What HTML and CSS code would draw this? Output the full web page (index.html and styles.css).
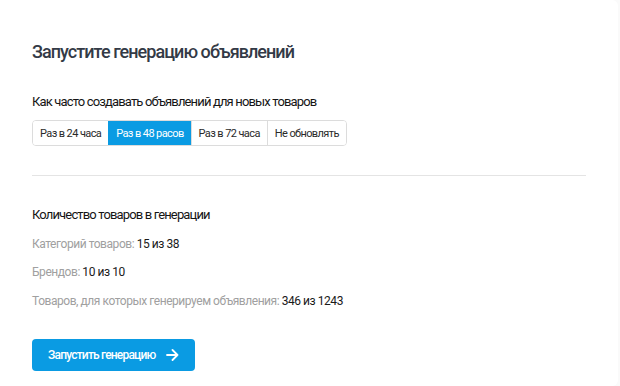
FILE: index.html
```html
<!DOCTYPE html>
<html lang="ru">
<head>
    <meta charset="UTF-8">
    <meta name="viewport" content="width=device-width, initial-scale=1.0">
    <title>Генерация объявлений</title>
    <link rel="stylesheet" href="styles.css">
</head>
<body>
<div class="card">
    <h1 class="card-title">Запустите генерацию объявлений</h1>

    <!-- частота генерации -->
    <div class="section">
        <div class="section-label">Как часто создавать объявлений для новых товаров</div>
        <div class="segments">
            <button class="segment">Раз в 24 часа</button>
            <button class="segment active">Раз в 48 расов</button>
            <button class="segment">Раз в 72 часа</button>
            <button class="segment">Не обновлять</button>
        </div>
    </div>

    <hr class="divider">

    <!-- статистика -->
    <div class="stats">
        <div class="section-label">Количество товаров в генерации</div>
        <div class="stat"><span class="stat-name">Категорий товаров:</span> 15 из 38</div>
        <div class="stat"><span class="stat-name">Брендов:</span> 10 из 10</div>
        <div class="stat"><span class="stat-name">Товаров, для которых генерируем объявления:</span> 346 из 1243</div>
    </div>

    <button class="start-btn">
        Запустить генерацию
        <svg width="13" height="12" viewBox="0 0 13 12" fill="none" stroke="#fff" stroke-width="1.8" stroke-linecap="round" stroke-linejoin="round">
            <path d="M1 6h10.5M6.5 1l5 5-5 5"/>
        </svg>
    </button>
</div>
</body>
</html>
```

FILE: styles.css
```css
* {
    margin: 0;
    padding: 0;
    box-sizing: border-box;
}

body {
    font-family: Roboto, "Liberation Sans", sans-serif;
    background-color: #fafafa;
    color: #1a1a1a;
}

.card {
    background-color: #ffffff;
    width: 618px;
    height: 386px;
    border-radius: 0 6px 6px 0;
    padding: 42px 32px 0 32px;
}

.card-title {
    font-size: 18px;
    font-weight: 500;
    color: #333a46;
    line-height: 20px;
    letter-spacing: -0.95px;
    margin-bottom: 32px;
}

.section-label {
    font-size: 13px;
    line-height: 16px;
    letter-spacing: -0.85px;
    color: #151515;
}

.segments {
    display: inline-flex;
    margin-top: 10px;
    border: 1px solid #dcdcdc;
    border-radius: 4px;
    overflow: hidden;
}

.segment {
    font-family: inherit;
    font-size: 11px;
    letter-spacing: -0.6px;
    color: #2a2a2a;
    background: #fff;
    border: none;
    border-left: 1px solid #dcdcdc;
    height: 24px;
    padding: 0 7px;
    cursor: pointer;
}

.segment:first-child {
    border-left: none;
}

.segment.active {
    background-color: #0a9be3;
    color: #fff;
    border-left-color: #0a9be3;
}

.divider {
    border: none;
    border-top: 1px solid #e4e4e4;
    margin: 29px 0 0 0;
}

.stats {
    margin-top: 31px;
}

.stat {
    font-size: 12px;
    line-height: 16px;
    letter-spacing: -0.45px;
    margin-top: 12.5px;
    color: #1a1a1a;
}

.stat-name {
    color: #a0a0a0;
}

.start-btn {
    margin-top: 30px;
    display: flex;
    align-items: center;
    gap: 10px;
    height: 32px;
    padding: 0 16px;
    border: none;
    border-radius: 4px;
    background-color: #0a9be3;
    color: #fff;
    font-family: inherit;
    font-size: 12px;
    font-weight: 500;
    letter-spacing: -0.8px;
    cursor: pointer;
}
```
